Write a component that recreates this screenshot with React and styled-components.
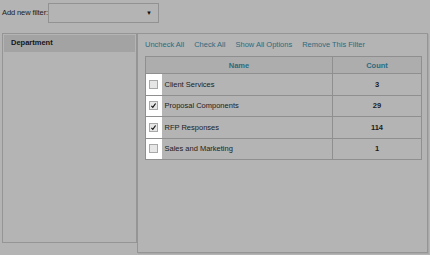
import styled, { createGlobalStyle } from "styled-components";

const Global = createGlobalStyle`
  html, body {
    margin: 0;
    background: #b4b4b4;
    font-family: "Liberation Sans", Arial, sans-serif;
    font-size: 7.5px;
    color: #1c1c1c;
  }
`;

const Page = styled.div`
  width: 430px;
  height: 255px;
  overflow: hidden;
`;

const TopBar = styled.div`
  display: flex;
  align-items: center;
  height: 21px;
  padding: 2px 0 0 2px;
`;

const Label = styled.span`
  letter-spacing: -0.1px;
`;

const SelectBox = styled.div`
  width: 111px;
  height: 20px;
  border: 1px solid #929292;
  display: flex;
  align-items: center;
  justify-content: flex-end;
  padding-right: 6px;
  box-sizing: border-box;
  font-size: 6px;
  color: #111;
`;

const Main = styled.div`
  display: flex;
  margin-top: 10px;
  padding-left: 2px;
`;

const LeftPanel = styled.div`
  width: 135px;
  height: 210px;
  box-sizing: border-box;
  border: 1px solid #959595;
  padding: 1px;
`;

const FilterItem = styled.div`
  height: 17px;
  line-height: 16px;
  padding-left: 7px;
  background: #a3a3a3;
  font-weight: bold;
  color: #151515;
`;

const RightPanel = styled.div`
  width: 291px;
  height: 220px;
  box-sizing: border-box;
  border: 1px solid #959595;
  box-shadow: 1px 1px 0 #a8a8a8;
  padding: 0 7px;
`;

const Links = styled.div`
  display: flex;
  gap: 10px;
  height: 22px;
  padding-bottom: 1px;
  box-sizing: border-box;
  align-items: center;
`;

const Link = styled.span`
  color: #2b6b80;
`;

const Table = styled.table`
  border-collapse: collapse;
  width: 276px;
  border: 1px solid #8f8f8f;
  table-layout: fixed;
`;

const Th = styled.th`
  height: 16px;
  padding: 0;
  font-weight: bold;
  color: #2b6b80;
  background: #adadad;
  border: 1px solid #8f8f8f;
  text-align: center;
`;

const Td = styled.td`
  height: 20.5px;
  padding: 0;
  padding-left: ${(p) => (p.$indent ? "3px" : "0")};
  border-top: 1px solid #8f8f8f;
  border-bottom: 1px solid #8f8f8f;
  border-right: ${(p) => (p.$noRight ? "none" : "1px solid #8f8f8f")};
  text-align: ${(p) => p.$align || "left"};
  background: ${(p) => (p.$white ? "#ffffff" : "transparent")};
  font-weight: ${(p) => (p.$bold ? "bold" : "normal")};
`;

const Box = styled.span`
  display: block;
  width: 7px;
  height: 7px;
  margin-left: 3px;
  border: 1px solid #a8a8a8;
  background: #e6e6e6;
  position: relative;
`;

const rows = [
  { name: "Client Services", count: 3, checked: false },
  { name: "Proposal Components", count: 29, checked: true },
  { name: "RFP Responses", count: 114, checked: true },
  { name: "Sales and Marketing", count: 1, checked: false },
];

const Check = ({ checked }) => (
  <Box>
    {checked && (
      <svg width="7" height="7" viewBox="0 0 7 7" style={{ position: "absolute", left: 0, top: 0 }}>
        <path d="M1.4 3.9 L2.8 5.3 L5.6 1.5" stroke="#111" strokeWidth="1.2" fill="none" />
      </svg>
    )}
  </Box>
);

export default function App() {
  return (
    <Page>
      <Global />
      <TopBar>
        <Label>Add new filter:</Label>
        <SelectBox>▼</SelectBox>
      </TopBar>
      <Main>
        <LeftPanel>
          <FilterItem>Department</FilterItem>
        </LeftPanel>
        <RightPanel>
          <Links>
            <Link>Uncheck All</Link>
            <Link>Check All</Link>
            <Link>Show All Options</Link>
            <Link>Remove This Filter</Link>
          </Links>
          <Table>
            <colgroup>
              <col style={{ width: 16 }} />
              <col style={{ width: 171 }} />
              <col style={{ width: 89 }} />
            </colgroup>
            <thead>
              <tr>
                <Th colSpan={2}>Name</Th>
                <Th>Count</Th>
              </tr>
            </thead>
            <tbody>
              {rows.map((r) => (
                <tr key={r.name}>
                  <Td $white $noRight>
                    <Check checked={r.checked} />
                  </Td>
                  <Td $indent>{r.name}</Td>
                  <Td $align="center" $bold>
                    {r.count}
                  </Td>
                </tr>
              ))}
            </tbody>
          </Table>
        </RightPanel>
      </Main>
    </Page>
  );
}
